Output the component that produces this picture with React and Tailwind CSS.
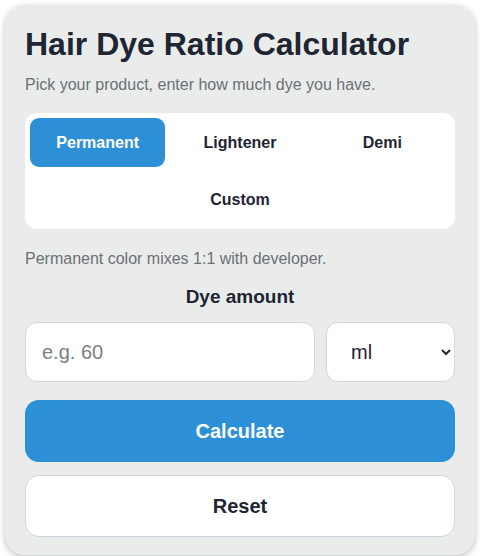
import { useState } from 'react';

const TABS = ['Permanent', 'Lightener', 'Demi', 'Custom'];

export default function App() {
    const [tab, setTab] = useState('Permanent');

    return (
        <div className="min-h-screen bg-white p-[5px] font-['Liberation_Sans',Arial,sans-serif] text-[#1e2533]">
            <div className="w-[470px] h-[550px] bg-[#eaeceb] rounded-[20px] shadow-[0_2px_6px_rgba(0,0,0,0.25)] px-5 pt-[19px] pb-5">
                <h1 className="text-[32px] leading-[40px] font-bold">Hair Dye Ratio Calculator</h1>
                <p className="mt-[11px] text-[16px] leading-5 text-[#6b7075]">Pick your product, enter how much dye you have.</p>

                {/* Product tabs */}
                <div className="mt-[18px] bg-white rounded-[12px] p-[5px] grid grid-cols-3 gap-x-[7px] gap-y-[8px]">
                    {TABS.map((t) => (
                        <button
                            key={t}
                            onClick={() => setTab(t)}
                            className={
                                'h-[49px] rounded-[9px] text-[16px] font-bold ' +
                                (t === 'Custom' ? 'col-start-2 ' : '') +
                                (tab === t ? 'bg-[#2d90d6] text-white' : 'text-[#1e2533]')
                            }
                        >
                            {t}
                        </button>
                    ))}
                </div>

                <p className="mt-[20px] text-[16px] leading-5 text-[#6b7075]">Permanent color mixes 1:1 with developer.</p>

                <label className="block mt-[18px] text-center text-[19px] leading-5 font-bold">Dye amount</label>
                <div className="mt-[15px] flex gap-[11px]">
                    <input
                        type="number"
                        placeholder="e.g. 60"
                        className="w-[290px] h-[60px] rounded-[12px] bg-white border border-[#cfd6e2] px-4 text-[20px] placeholder:text-[#7a7f85] outline-none"
                    />
                    <select className="flex-1 h-[60px] rounded-[12px] bg-white border border-[#cfd6e2] pl-5 pr-1 text-[20px] outline-none">
                        <option>ml</option>
                        <option>oz</option>
                        <option>g</option>
                    </select>
                </div>

                <button className="mt-[18px] w-full h-[62px] rounded-[14px] bg-[#2d90d6] text-white text-[20px] font-bold">
                    Calculate
                </button>
                <button className="mt-[13px] w-full h-[62px] rounded-[14px] bg-white border border-[#cfd6e2] text-[20px] font-bold">
                    Reset
                </button>
            </div>
        </div>
    );
}
